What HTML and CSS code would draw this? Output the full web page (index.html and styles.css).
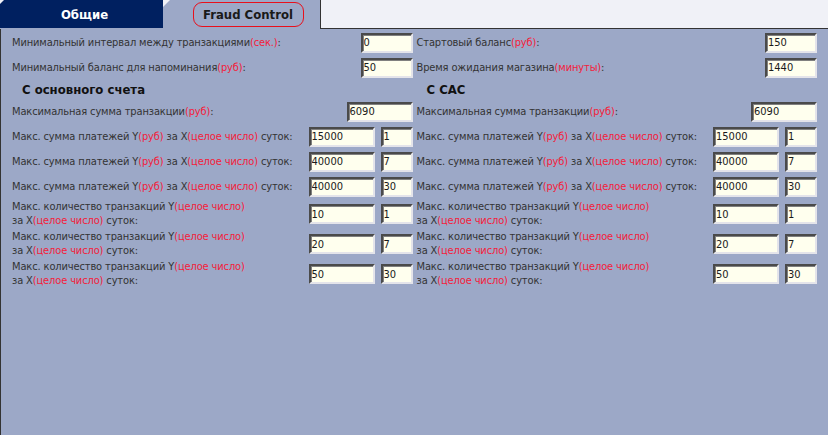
FILE: index.html
```html
<!DOCTYPE html>
<html lang="ru">
<head>
    <meta charset="UTF-8">
    <title>Fraud Control</title>
    <link rel="stylesheet" href="styles.css">
</head>
<body>
    <div class="tabs">
        <div class="tab tab-plain">Общие</div>
        <div class="tab tab-active"><span class="tab-focus">Fraud Control</span></div>
        <div class="tab-rest"></div>
    </div>

    <div class="panel">
        <!-- основной счет -->
        <div class="col">
            <div class="row">
                <label>Минимальный интервал между транзакциями<em>(сек.)</em>:</label>
                <input class="field w-sm" value="0">
            </div>
            <div class="row">
                <label>Минимальный баланс для напоминания<em>(руб)</em>:</label>
                <input class="field w-sm" value="50">
            </div>
            <div class="row head">С основного счета</div>
            <div class="row">
                <label>Максимальная сумма транзакции<em>(руб)</em>:</label>
                <input class="field w-md" value="6090">
            </div>
            <div class="row">
                <label>Макс. сумма платежей Y<em>(руб)</em> за X<em>(целое число)</em> суток:</label>
                <div class="pair"><input class="field w-y" value="15000"><input class="field w-x" value="1"></div>
            </div>
            <div class="row">
                <label>Макс. сумма платежей Y<em>(руб)</em> за X<em>(целое число)</em> суток:</label>
                <div class="pair"><input class="field w-y" value="40000"><input class="field w-x" value="7"></div>
            </div>
            <div class="row">
                <label>Макс. сумма платежей Y<em>(руб)</em> за X<em>(целое число)</em> суток:</label>
                <div class="pair"><input class="field w-y" value="40000"><input class="field w-x" value="30"></div>
            </div>
            <div class="row tall">
                <label>Макс. количество транзакций Y<em>(целое число)</em><br>за X<em>(целое число)</em> суток:</label>
                <div class="pair"><input class="field w-y" value="10"><input class="field w-x" value="1"></div>
            </div>
            <div class="row tall">
                <label>Макс. количество транзакций Y<em>(целое число)</em><br>за X<em>(целое число)</em> суток:</label>
                <div class="pair"><input class="field w-y" value="20"><input class="field w-x" value="7"></div>
            </div>
            <div class="row tall">
                <label>Макс. количество транзакций Y<em>(целое число)</em><br>за X<em>(целое число)</em> суток:</label>
                <div class="pair"><input class="field w-y" value="50"><input class="field w-x" value="30"></div>
            </div>
        </div>

        <!-- САС -->
        <div class="col">
            <div class="row">
                <label>Стартовый баланс<em>(руб)</em>:</label>
                <input class="field w-sm" value="150">
            </div>
            <div class="row">
                <label>Время ожидания магазина<em>(минуты)</em>:</label>
                <input class="field w-sm" value="1440">
            </div>
            <div class="row head">С САС</div>
            <div class="row">
                <label>Максимальная сумма транзакции<em>(руб)</em>:</label>
                <input class="field w-md" value="6090">
            </div>
            <div class="row">
                <label>Макс. сумма платежей Y<em>(руб)</em> за X<em>(целое число)</em> суток:</label>
                <div class="pair"><input class="field w-y" value="15000"><input class="field w-x" value="1"></div>
            </div>
            <div class="row">
                <label>Макс. сумма платежей Y<em>(руб)</em> за X<em>(целое число)</em> суток:</label>
                <div class="pair"><input class="field w-y" value="40000"><input class="field w-x" value="7"></div>
            </div>
            <div class="row">
                <label>Макс. сумма платежей Y<em>(руб)</em> за X<em>(целое число)</em> суток:</label>
                <div class="pair"><input class="field w-y" value="40000"><input class="field w-x" value="30"></div>
            </div>
            <div class="row tall">
                <label>Макс. количество транзакций Y<em>(целое число)</em><br>за X<em>(целое число)</em> суток:</label>
                <div class="pair"><input class="field w-y" value="10"><input class="field w-x" value="1"></div>
            </div>
            <div class="row tall">
                <label>Макс. количество транзакций Y<em>(целое число)</em><br>за X<em>(целое число)</em> суток:</label>
                <div class="pair"><input class="field w-y" value="20"><input class="field w-x" value="7"></div>
            </div>
            <div class="row tall">
                <label>Макс. количество транзакций Y<em>(целое число)</em><br>за X<em>(целое число)</em> суток:</label>
                <div class="pair"><input class="field w-y" value="50"><input class="field w-x" value="30"></div>
            </div>
        </div>
    </div>
</body>
</html>
```

FILE: styles.css
```css
html, body {
    height: 100%;
}

body {
    margin: 0;
    display: flex;
    flex-direction: column;
    background-color: #9ca8c7;
    font-family: "DejaVu Sans Condensed", "DejaVu Sans", sans-serif;
    font-size: 11px;
    color: #333;
}

.tabs {
    display: flex;
    height: 29px;
    background-color: #f0f1f7;
}

.tab {
    box-sizing: border-box;
    display: flex;
    align-items: center;
    font-size: 13px;
    font-weight: bold;
}

.tab-plain {
    width: 163px;
    height: 29px;
    padding: 0 0 1px 6px;
    justify-content: center;
    color: white;
    background: linear-gradient(#002060 28px, #9ca8c7 28px);
    clip-path: polygon(4px 0, 100% 0, 100% 100%, 0 100%, 0 4px);
}

.tab-active {
    width: 158px;
    height: 29px;
    padding: 1px 0 1px 30px;
    color: #1a1a1a;
    background-color: #9ca8c7;
    border-right: 1px solid #333;
    clip-path: polygon(7px 0, 100% 0, 100% 100%, 0 100%, 0 7px);
}

.tab-focus {
    box-sizing: border-box;
    width: 111px;
    height: 25px;
    padding-left: 9px;
    line-height: 23px;
    border: 1px solid #e8101c;
    border-radius: 9px;
}

.tab-rest {
    flex: 1;
    border-bottom: 1px solid #333;
}

.panel {
    flex: 1;
    display: flex;
    gap: 4px;
    padding: 1px 11px 0 11px;
    border-left: 1px solid #333;
}

.col {
    width: 401px;
    display: flex;
    flex-direction: column;
}

.row {
    height: 25px;
    display: flex;
    align-items: center;
    justify-content: space-between;
}

.row.tall {
    height: 30px;
}

.row.head {
    height: 19px;
    padding-left: 10px;
    font-size: 13px;
    font-weight: bold;
    color: #111;
}

label {
    line-height: 14px;
    letter-spacing: -0.13px;
}

label em {
    font-style: normal;
    color: #f4203a;
}

.pair {
    display: flex;
    gap: 6px;
}

.field {
    box-sizing: border-box;
    height: 20px;
    padding: 0 1px;
    margin: 0;
    font-family: "DejaVu Sans Condensed", "DejaVu Sans", sans-serif;
    font-size: 11px;
    color: #1a1a1a;
    background-color: #ffffee;
    border: 2px solid;
    border-color: #4a4a4a #e4e4ea #e4e4ea #4a4a4a;
    box-shadow: inset 1px 1px 0 #808080;
    outline: none;
}

.w-sm { width: 52px; }
.w-md { width: 66px; }
.w-y { width: 66px; }
.w-x { width: 32px; }
```
